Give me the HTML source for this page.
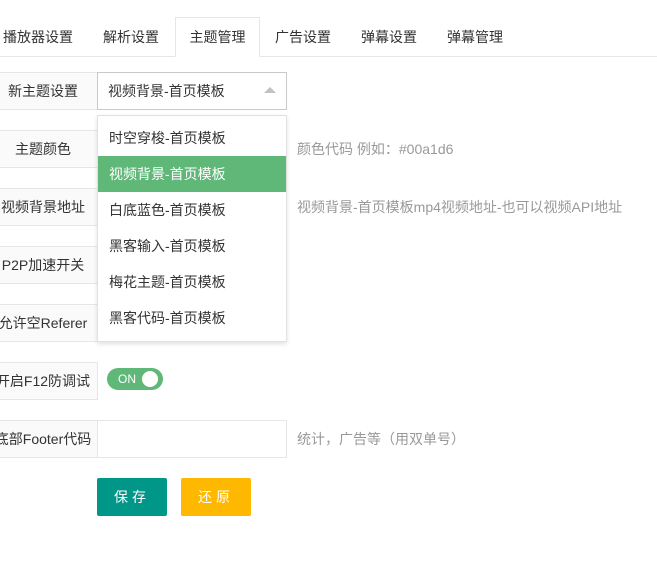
<!DOCTYPE html>
<html><head><meta charset="utf-8"><style>
*{margin:0;padding:0;box-sizing:border-box}
body{width:657px;height:568px;background:#fff;font-family:"Liberation Sans","Noto Sans CJK SC",sans-serif;font-size:14px;color:#333;position:relative;overflow:hidden}
.a{position:absolute;white-space:nowrap}
.tabline{position:absolute;left:0;top:56px;width:657px;height:1px;background:#e6e6e6}
.tab{position:absolute;top:18px;height:39px;line-height:39px;text-align:center;width:86px}
.tab.on{background:#fff;border:1px solid #e6e6e6;border-bottom:1px solid #fff;top:17px;height:40px;line-height:38px}
.lab{position:absolute;left:-12px;width:110px;height:38px;line-height:36px;text-align:center;background:#fafafa;border:1px solid #e6e6e6;}
.inp{position:absolute;left:97px;width:190px;height:38px;border:1px solid #e6e6e6;background:#fff}
.hint{position:absolute;left:297px;color:#999;line-height:38px}
.dd{position:absolute;left:97px;top:115px;width:190px;height:227px;background:#fff;border:1px solid #e2e2e2;box-shadow:0 2px 4px rgba(0,0,0,.12);padding-top:4px}
.dd div{height:36px;line-height:36px;padding-left:11px;color:#333}
.dd .sel{background:#5FB878;color:#fff}
.btn{position:absolute;top:478px;width:70px;height:38px;line-height:38px;color:#fff;text-align:center;border-radius:2px;letter-spacing:4px}
</style></head><body>
<div class="tabline"></div>
<div class="tab" style="left:-12px;width:100px">播放器设置</div>
<div class="tab" style="left:88px">解析设置</div>
<div class="tab on" style="left:175px;width:85px">主题管理</div>
<div class="tab" style="left:260px">广告设置</div>
<div class="tab" style="left:346px">弹幕设置</div>
<div class="tab" style="left:432px">弹幕管理</div>

<div class="lab" style="top:72px">新主题设置</div>
<div class="inp" style="top:72px;border-color:#c9c9c9;line-height:36px;padding-left:10px">视频背景-首页模板
<div style="position:absolute;right:10px;top:14px;width:0;height:0;border-left:6px solid transparent;border-right:6px solid transparent;border-bottom:6px solid #c2c2c2"></div></div>

<div class="lab" style="top:130px">主题颜色</div>
<div class="hint" style="top:130px">颜色代码 例如<span style="font-family:'Noto Sans CJK SC',sans-serif">：</span>#00a1d6</div>
<div class="lab" style="top:188px">视频背景地址</div>
<div class="hint" style="top:188px">视频背景-首页模板mp4视频地址-也可以视频API地址</div>
<div class="lab" style="top:246px">P2P加速开关</div>
<div class="lab" style="top:304px">允许空Referer</div>
<div class="lab" style="top:362px">开启F12防调试</div>
<div class="a" style="left:107px;top:368px;width:56px;height:22px;border-radius:11px;background:#5FB878;color:#fff;font-size:12px;line-height:22px;padding-left:11px">ON<div style="position:absolute;left:35px;top:3px;width:16px;height:16px;border-radius:50%;background:#fff"></div></div>
<div class="lab" style="top:420px">底部Footer代码</div>
<div class="inp" style="top:420px"></div>
<div class="hint" style="top:420px">统计，广告等（用双单号）</div>

<div class="dd">
<div>时空穿梭-首页模板</div>
<div class="sel">视频背景-首页模板</div>
<div>白底蓝色-首页模板</div>
<div>黑客输入-首页模板</div>
<div>梅花主题-首页模板</div>
<div>黑客代码-首页模板</div>
</div>

<div class="btn" style="left:97px;background:#009688">保存</div>
<div class="btn" style="left:181px;background:#FFB800">还原</div>
</body></html>
